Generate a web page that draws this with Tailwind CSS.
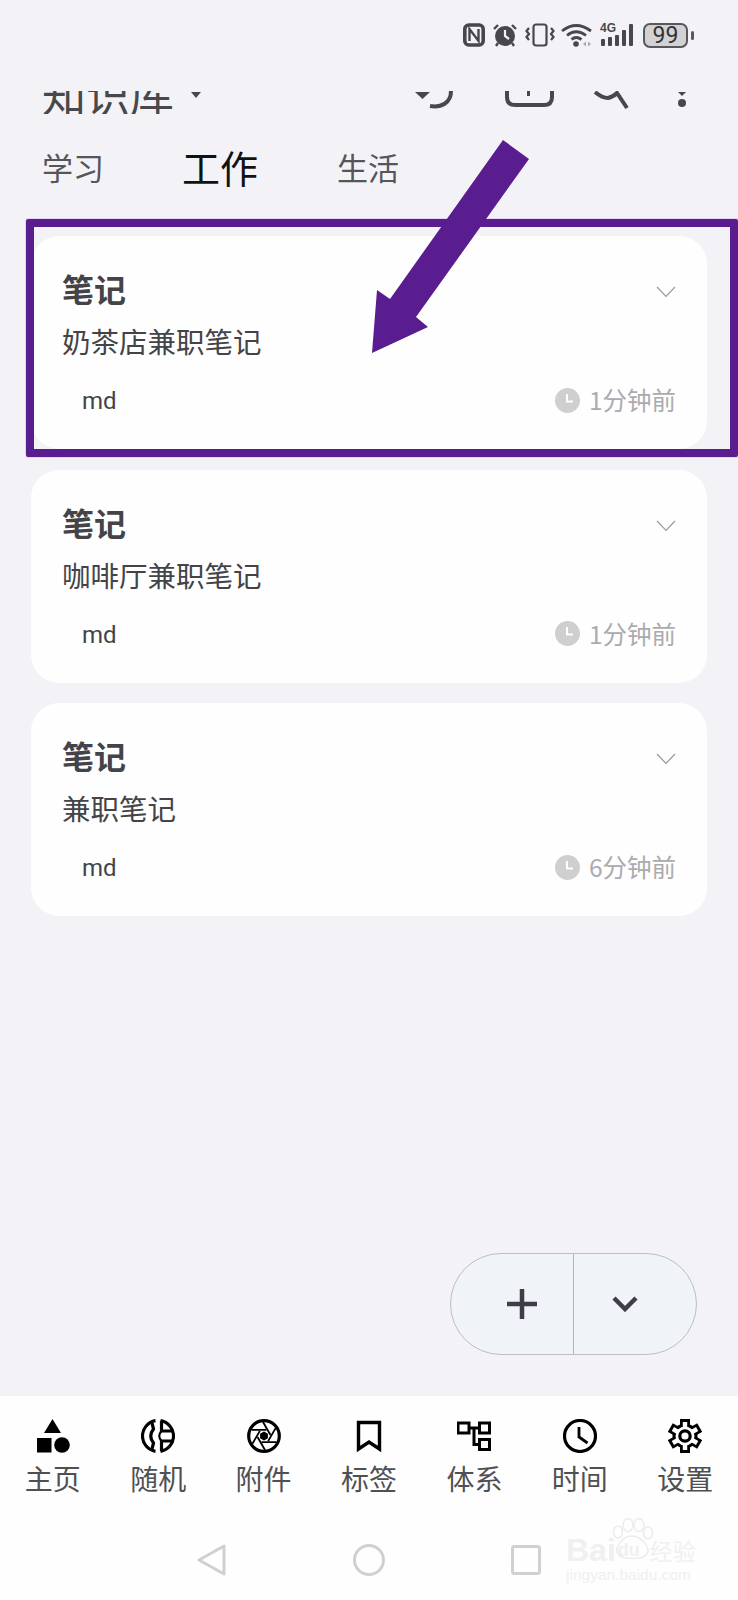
<!DOCTYPE html>
<html lang="zh">
<head>
<meta charset="utf-8">
<script src="https://cdn.jsdelivr.net/npm/@tailwindcss/browser@4"></script>
</head>
<body>
<div class="relative w-[738px] h-[1600px] overflow-hidden flex flex-col bg-[#f2f2f7] text-[#444448] font-['Noto_Sans_CJK_SC','Noto_Sans',sans-serif]">

  <!-- status bar -->
  <div class="h-[91px] shrink-0 flex justify-end items-start pt-[23px] pr-[44px] text-[#48484c]">
    <svg width="22" height="24" viewBox="0 0 22 24" fill="none" stroke="currentColor"><rect x="1.800" y="2" width="18.400" height="20" rx="4" stroke-width="3.600"/><path d="M6.500 18V6L15.500 18V6" stroke-width="2.400"/></svg>
    <svg class="ml-[7px]" width="26" height="24" viewBox="0 0 26 24" fill="currentColor"><circle cx="13" cy="13" r="10"/><path d="M2 6L6 2M24 6L20 2M6 20L4 23M20 20L22 23" stroke="currentColor" stroke-width="2.400"/><path d="M13 7V13L17 16" stroke="#f2f2f7" stroke-width="2.200" fill="none"/></svg>
    <svg class="ml-[7px]" width="30" height="24" viewBox="0 0 30 24" fill="none" stroke="currentColor" stroke-width="2.200"><rect x="8.500" y="1.500" width="13" height="21" rx="2.500"/><path d="M4 5L1.500 8L4 11L1.500 14L4 17M26 5L28.500 8L26 11L28.500 14L26 17"/></svg>
    <svg class="ml-[6px]" width="32" height="24" viewBox="0 0 32 24" fill="none" stroke="currentColor" stroke-width="2.800"><path d="M1 8Q15 -3 30 8M6 12.500Q15 5 25 12.500M10.500 16.500Q15 12.500 20.500 16.500"/><circle cx="15" cy="21" r="2.800" fill="currentColor" stroke="none"/><path d="M22 21L25 18.500V23.500ZM30 21L27 18.500V23.500Z" fill="#a8a8ac" stroke="none"/></svg>
    <div class="relative ml-[7px] w-[35px] h-[24px]">
      <span class="absolute left-0 -top-[2px] text-[12px] leading-[14px] font-bold font-['Liberation_Sans',sans-serif]">4G</span>
      <svg class="absolute left-0 top-0" width="35" height="24" viewBox="0 0 35 24" fill="currentColor"><rect x="1" y="16" width="4" height="7" rx="1"/><rect x="8" y="14" width="4" height="9" rx="1"/><rect x="15" y="12" width="4" height="11" rx="1"/><rect x="22" y="7" width="4" height="16" rx="1"/><rect x="29" y="1" width="4" height="22" rx="1"/></svg>
    </div>
    <div class="ml-[8px] w-[45px] h-[25px] rounded-[7px] border-2 border-[#58585c] bg-[#d2d2d4] flex items-center justify-center text-[23px] leading-[21px] font-['Roboto',sans-serif] text-[#333]">99</div>
    <div class="ml-[3px] mt-[8px] w-[3px] h-[9px] rounded-sm bg-[#58585c]"></div>
  </div>

  <!-- clipped header -->
  <div class="h-[23px] shrink-0 overflow-hidden flex items-end pl-[42px] pr-[51px]">
    <span class="text-[44px] leading-[44px] -mb-[1px] text-[#48484c] whitespace-nowrap">知识库</span>
    <svg class="self-start mt-[1px] ml-[17px]" width="10" height="6" viewBox="0 0 10 6" fill="#48484c"><path d="M0 0H10L5 6Z"/></svg>
    <div class="ml-auto self-start flex text-[#48484c]">
      <svg width="40" height="23" viewBox="0 0 40 23" fill="none" stroke="currentColor" stroke-width="4"><path d="M0 1H15L7.500 8Z" fill="currentColor" stroke="none"/><path d="M15 15C26 17 36 12 36 0"/></svg>
      <svg class="ml-[50px]" width="49" height="23" viewBox="0 0 49 23" fill="none" stroke="currentColor" stroke-width="4"><path d="M2 0V6Q2 14 10 14H39Q47 14 47 6V0"/><rect x="22" y="0" width="3" height="5" fill="currentColor" stroke="none"/></svg>
      <svg class="ml-[40px]" width="35" height="23" viewBox="0 0 35 23" fill="none" stroke="currentColor" stroke-width="4"><path d="M1 1Q8 7 14 7Q19 6 23 2L33 17"/></svg>
      <svg class="ml-[48px]" width="10" height="23" viewBox="0 0 10 23" fill="currentColor"><path d="M1 1H9L5 5Z"/><circle cx="5" cy="12" r="4"/></svg>
    </div>
  </div>

  <!-- tabs -->
  <div class="h-[106px] mb-[16px] shrink-0 flex items-center pl-[42px]">
    <span class="text-[31px] leading-[36px] text-[#55555a]">学习</span>
    <span class="ml-[78px] text-[38px] leading-[44px] text-[#111]">工作</span>
    <span class="ml-[79px] text-[31px] leading-[36px] text-[#55555a]">生活</span>
  </div>

  <!-- cards -->
  <div class="flex flex-col gap-[20.500px] pl-[31px] pr-[31px]">
    <div class="h-[213px] rounded-[28px] bg-[#fefefe] pt-[34px] pl-[31px] pr-[31px]">
      <div class="flex justify-between items-center h-[36px]">
        <span class="text-[32px] leading-[36px] font-bold">笔记</span>
        <svg class="mt-[8px]" width="20" height="12" viewBox="0 0 20 12" fill="none" stroke="#9a9a9e" stroke-width="1.200"><path d="M1 1L10 10.500L19 1"/></svg>
      </div>
      <div class="mt-[17px] text-[28.500px] leading-[36px]">奶茶店兼职笔记</div>
      <div class="mt-[23px] flex justify-between items-center h-[36px] pl-[20px]">
        <span class="mt-[2px] text-[24px] leading-[36px] font-['Roboto',sans-serif]">md</span>
        <div class="flex items-center text-[#ababaf] text-[24.500px] leading-[36px]">
          <svg width="25" height="25" viewBox="0 0 25 25"><circle cx="12.500" cy="12.500" r="12.500" fill="#cfcfcf"/><path d="M12 6V13.500H18" fill="none" stroke="#fff" stroke-width="2"/></svg>
          <span class="ml-[9px]">1分钟前</span>
        </div>
      </div>
    </div>
    <div class="h-[213px] rounded-[28px] bg-[#fefefe] pt-[34px] pl-[31px] pr-[31px]">
      <div class="flex justify-between items-center h-[36px]">
        <span class="text-[32px] leading-[36px] font-bold">笔记</span>
        <svg class="mt-[8px]" width="20" height="12" viewBox="0 0 20 12" fill="none" stroke="#9a9a9e" stroke-width="1.200"><path d="M1 1L10 10.500L19 1"/></svg>
      </div>
      <div class="mt-[17px] text-[28.500px] leading-[36px]">咖啡厅兼职笔记</div>
      <div class="mt-[23px] flex justify-between items-center h-[36px] pl-[20px]">
        <span class="mt-[2px] text-[24px] leading-[36px] font-['Roboto',sans-serif]">md</span>
        <div class="flex items-center text-[#ababaf] text-[24.500px] leading-[36px]">
          <svg width="25" height="25" viewBox="0 0 25 25"><circle cx="12.500" cy="12.500" r="12.500" fill="#cfcfcf"/><path d="M12 6V13.500H18" fill="none" stroke="#fff" stroke-width="2"/></svg>
          <span class="ml-[9px]">1分钟前</span>
        </div>
      </div>
    </div>
    <div class="h-[213px] rounded-[28px] bg-[#fefefe] pt-[34px] pl-[31px] pr-[31px]">
      <div class="flex justify-between items-center h-[36px]">
        <span class="text-[32px] leading-[36px] font-bold">笔记</span>
        <svg class="mt-[8px]" width="20" height="12" viewBox="0 0 20 12" fill="none" stroke="#9a9a9e" stroke-width="1.200"><path d="M1 1L10 10.500L19 1"/></svg>
      </div>
      <div class="mt-[17px] text-[28.500px] leading-[36px]">兼职笔记</div>
      <div class="mt-[23px] flex justify-between items-center h-[36px] pl-[20px]">
        <span class="mt-[2px] text-[24px] leading-[36px] font-['Roboto',sans-serif]">md</span>
        <div class="flex items-center text-[#ababaf] text-[24.500px] leading-[36px]">
          <svg width="25" height="25" viewBox="0 0 25 25"><circle cx="12.500" cy="12.500" r="12.500" fill="#cfcfcf"/><path d="M12 6V13.500H18" fill="none" stroke="#fff" stroke-width="2"/></svg>
          <span class="ml-[9px]">6分钟前</span>
        </div>
      </div>
    </div>
  </div>

  <!-- bottom navigation -->
  <div class="mt-auto h-[204px] shrink-0 bg-[#fefefe] pt-[23px]">
    <div class="grid grid-cols-7 text-[28px] leading-[34px] text-[#505054]">
      <div class="flex flex-col items-center gap-[8px]">
        <svg width="34" height="34" viewBox="0 0 34 34" fill="#000"><path d="M16.500 0L25 14H8Z"/><rect x="1" y="19" width="14.500" height="14.500"/><circle cx="26" cy="26" r="7.800"/></svg>
        <span>主页</span>
      </div>
      <div class="flex flex-col items-center gap-[8px]">
        <svg width="34" height="34" viewBox="-17 -17 34 34" fill="none" stroke="#000" stroke-width="3.200"><path d="M-2.500 -15.300A15.500 15.500 0 0 0 -2.500 15.300"/><path d="M2.500 -15.300A15.500 15.500 0 0 1 2.500 15.300"/><path d="M-6 -13L-4.500 -7Q-10 0 -4.500 7L-6 13"/><path d="M3.500 -15V-5H15M3.500 15V5H15"/><path d="M3.500 -5Q-1 0 3.500 5" stroke-width="2"/></svg>
        <span>随机</span>
      </div>
      <div class="flex flex-col items-center gap-[8px]">
        <svg width="34" height="34" viewBox="-17 -17 34 34"><circle r="15.300" fill="none" stroke="#000" stroke-width="3.200"/><path d="M0 -4.500L3.900 -2.250V2.250L0 4.500L-3.900 2.250V-2.250Z" fill="#000"/><g fill="none" stroke="#000" stroke-width="1.800"><path d="M-1 -14L6.500 -1"/><path d="M-1 -14L6.500 -1" transform="rotate(60)"/><path d="M-1 -14L6.500 -1" transform="rotate(120)"/><path d="M-1 -14L6.500 -1" transform="rotate(180)"/><path d="M-1 -14L6.500 -1" transform="rotate(240)"/><path d="M-1 -14L6.500 -1" transform="rotate(300)"/></g></svg>
        <span>附件</span>
      </div>
      <div class="flex flex-col items-center gap-[8px]">
        <svg width="34" height="34" viewBox="0 0 34 34" fill="none" stroke="#000" stroke-width="3.400"><path d="M6.500 3.500H27.500V30L17 23L6.500 30Z"/></svg>
        <span>标签</span>
      </div>
      <div class="flex flex-col items-center gap-[8px]">
        <svg width="34" height="34" viewBox="0 0 34 34" fill="none" stroke="#000" stroke-width="3"><rect x="1" y="4" width="11" height="10"/><rect x="22.500" y="4" width="10" height="10"/><rect x="22.500" y="20.500" width="10" height="10"/><path d="M12 9H22.500M17 9V25.500H22.500"/></svg>
        <span>体系</span>
      </div>
      <div class="flex flex-col items-center gap-[8px]">
        <svg width="34" height="34" viewBox="-17 -17 34 34" fill="none" stroke="#000"><circle r="15.500" stroke-width="3.200"/><path d="M-1 -9V1L7.500 7" stroke-width="2.800"/></svg>
        <span>时间</span>
      </div>
      <div class="flex flex-col items-center gap-[8px]">
        <svg width="34" height="34" viewBox="-17 -17 34 34">
          <g fill="#000"><circle r="12.500"/><rect x="-5" y="-17" width="10" height="10"/><rect x="-5" y="-17" width="10" height="10" transform="rotate(60)"/><rect x="-5" y="-17" width="10" height="10" transform="rotate(120)"/><rect x="-5" y="-17" width="10" height="10" transform="rotate(180)"/><rect x="-5" y="-17" width="10" height="10" transform="rotate(240)"/><rect x="-5" y="-17" width="10" height="10" transform="rotate(300)"/></g>
          <g fill="#fefefe"><circle r="9.500"/><rect x="-2.200" y="-14" width="4.400" height="8"/><rect x="-2.200" y="-14" width="4.400" height="8" transform="rotate(60)"/><rect x="-2.200" y="-14" width="4.400" height="8" transform="rotate(120)"/><rect x="-2.200" y="-14" width="4.400" height="8" transform="rotate(180)"/><rect x="-2.200" y="-14" width="4.400" height="8" transform="rotate(240)"/><rect x="-2.200" y="-14" width="4.400" height="8" transform="rotate(300)"/></g>
          <circle r="5.200" fill="none" stroke="#000" stroke-width="3.200"/>
        </svg>
        <span>设置</span>
      </div>
    </div>
    <!-- system navigation -->
    <div class="mt-[49px] flex items-center pl-[197px]">
      <svg width="30" height="32" viewBox="0 0 30 32" fill="none" stroke="#d0d0d0" stroke-width="3" stroke-linejoin="round"><path d="M27 2V30L2 16Z"/></svg>
      <svg class="ml-[126px]" width="32" height="32" viewBox="0 0 32 32" fill="none" stroke="#d0d0d0" stroke-width="3"><circle cx="16" cy="16" r="14.500"/></svg>
      <svg class="ml-[126px]" width="30" height="30" viewBox="0 0 30 30" fill="none" stroke="#d0d0d0" stroke-width="3"><rect x="1.500" y="1.500" width="27" height="27" rx="2"/></svg>
    </div>
  </div>

  <!-- annotation frame -->
  <div class="absolute left-[26px] top-[219px] w-[712px] h-[238px] border-8 border-[#5a1d90] rounded-[2px] ring-1 ring-[#e6d2f4]"></div>
  <!-- annotation arrow -->
  <svg class="absolute left-0 top-0" width="738" height="400" viewBox="0 0 738 400"><polygon points="503,140 529,159 416,317 428,327 372,353 377,290 390,299" fill="#5a1d90"/></svg>

  <!-- floating split button -->
  <div class="absolute left-[450px] top-[1253px] w-[247px] h-[102px] rounded-full border border-[#bdbdc0] bg-[#f0f3f8] flex">
    <div class="w-[123px] border-r border-[#b5b5b8] flex items-center justify-center pl-[20px]">
      <svg width="30" height="30" viewBox="0 0 30 30" stroke="#3e3e46" stroke-width="4.500"><path d="M15 0V30M0 15H30"/></svg>
    </div>
    <div class="flex-1 flex items-center justify-center pr-[20px]">
      <svg width="26" height="16" viewBox="0 0 26 16" fill="none" stroke="#3e3e46" stroke-width="4.500"><path d="M2 2L13 13L24 2"/></svg>
    </div>
  </div>

  <!-- watermark -->
  <div class="absolute left-[566px] top-[1518px] w-[134px] text-[#f0f0f0]">
    <svg class="absolute left-[45px] top-0" width="42" height="44" viewBox="0 0 42 44" fill="none" stroke="#ececec" stroke-width="1.500"><ellipse cx="7" cy="14" rx="4.500" ry="6"/><ellipse cx="17" cy="7" rx="5" ry="6.500"/><ellipse cx="28" cy="7" rx="5" ry="6.500"/><ellipse cx="37" cy="15" rx="4.500" ry="6"/><path d="M21 18C12 18 3 29 7 36C11 42 32 42 36 36C40 29 30 18 21 18Z"/></svg>
    <div class="flex items-end h-[46px] leading-[28px]">
      <span class="text-[32px] font-bold font-['Liberation_Sans',sans-serif]">Bai</span>
      <span class="ml-[2px] text-[18px] font-bold font-['Liberation_Sans',sans-serif]">du</span>
      <span class="ml-[10px] text-[23px]">经验</span>
    </div>
    <div class="mt-[2px] text-[15.500px] leading-[18px] whitespace-nowrap font-['Liberation_Sans',sans-serif]">jingyan.baidu.com</div>
  </div>
</div>
</body>
</html>
